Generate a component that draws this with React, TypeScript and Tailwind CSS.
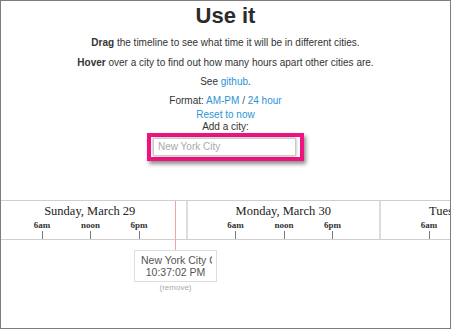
const days = ["Sunday, March 29", "Monday, March 30", "Tuesday, March 31"];

const ticks = [
  { label: "6am", line: "left-[47.5px]", text: "left-[48px]" },
  { label: "noon", line: "left-[96px]", text: "left-[96.5px]" },
  { label: "6pm", line: "left-[144.5px]", text: "left-[145px]" },
];

function Day({ label }: { label: string }) {
  return (
    <div className="relative h-full w-[193.5px] shrink-0 border-r-2 border-[#dcdcdc]">
      <div className="pt-[3px] text-center text-[12.5px] leading-[15px] whitespace-nowrap text-[#222]">{label}</div>
      {ticks.map((t) => (
        <div key={t.label}>
          <span className={`absolute top-[19px] -translate-x-1/2 text-[9px] leading-[10px] font-bold text-[#333] ${t.text}`}>
            {t.label}
          </span>
          <div className={`absolute bottom-0 h-[8px] w-px bg-[#7a7a7a] ${t.line}`} />
        </div>
      ))}
    </div>
  );
}

export default function App() {
  return (
    <div className="w-[451px] h-[329px] overflow-hidden border border-[#7d7d7d] bg-white font-['Liberation_Sans',Arial,sans-serif] text-[#333]">
      {/* Intro */}
      <div className="flex flex-col items-center text-[10px] leading-[12px]">
        <h1 className="mt-[2px] text-[22px] leading-[26px] font-bold text-[#2b2b2b]">Use it</h1>
        <p className="mt-[8px]">
          <b>Drag</b> the timeline to see what time it will be in different cities.
        </p>
        <p className="mt-[7.5px]">
          <b>Hover</b> over a city to find out how many hours apart other cities are.
        </p>
        <p className="mt-[7.5px]">
          See <a className="text-[#2a94d6]">github</a>.
        </p>
        <p className="mt-[7px]">
          Format: <a className="text-[#2a94d6]">AM-PM</a> <span className="text-[#555]">/</span>{" "}
          <a className="text-[#2a94d6]">24 hour</a>
        </p>
        <a className="mt-[1.5px] text-[#2a94d6]">Reset to now</a>
        <p>Add a city:</p>
        <div className="w-[157px] h-[28px] border-4 border-[#f0127f] shadow-[2px_3px_4px_rgba(0,0,0,0.45)]">
          <input
            placeholder="New York City"
            className="ml-[2px] mt-[1px] block w-[143px] h-[18px] border border-[#c9c9c9] bg-white px-[4px] text-[10px] text-[#333] placeholder:text-[#aaa] shadow-[0_0_3px_rgba(0,0,0,0.35)] outline-none"
          />
        </div>
      </div>

      {/* Timeline */}
      <div className="relative mt-[39px]">
        <div className="flex h-[40px] border-y border-[#cfcfcf] ml-[-7px] font-['Liberation_Serif','Times_New_Roman',serif]">
          {days.map((d) => (
            <Day key={d} label={d} />
          ))}
        </div>
        <div className="absolute left-[174px] top-[1px] h-[49px] w-px bg-[#f3a5a5]" />

        <div className="ml-[133px] mt-[10px] w-[83px]">
          <div className="border border-[#dedede] bg-white pl-[6px] pr-[4px] pt-[3px] pb-[2px] text-[10.5px] leading-[12.5px] text-[#555]">
            <div className="overflow-hidden whitespace-nowrap">New York City Clock</div>
            <div className="pr-[2px] text-center">10:37:02 PM</div>
          </div>
          <div className="mt-[1px] text-center text-[8px] leading-[10px] text-[#aaa]">(remove)</div>
        </div>
      </div>
    </div>
  );
}
